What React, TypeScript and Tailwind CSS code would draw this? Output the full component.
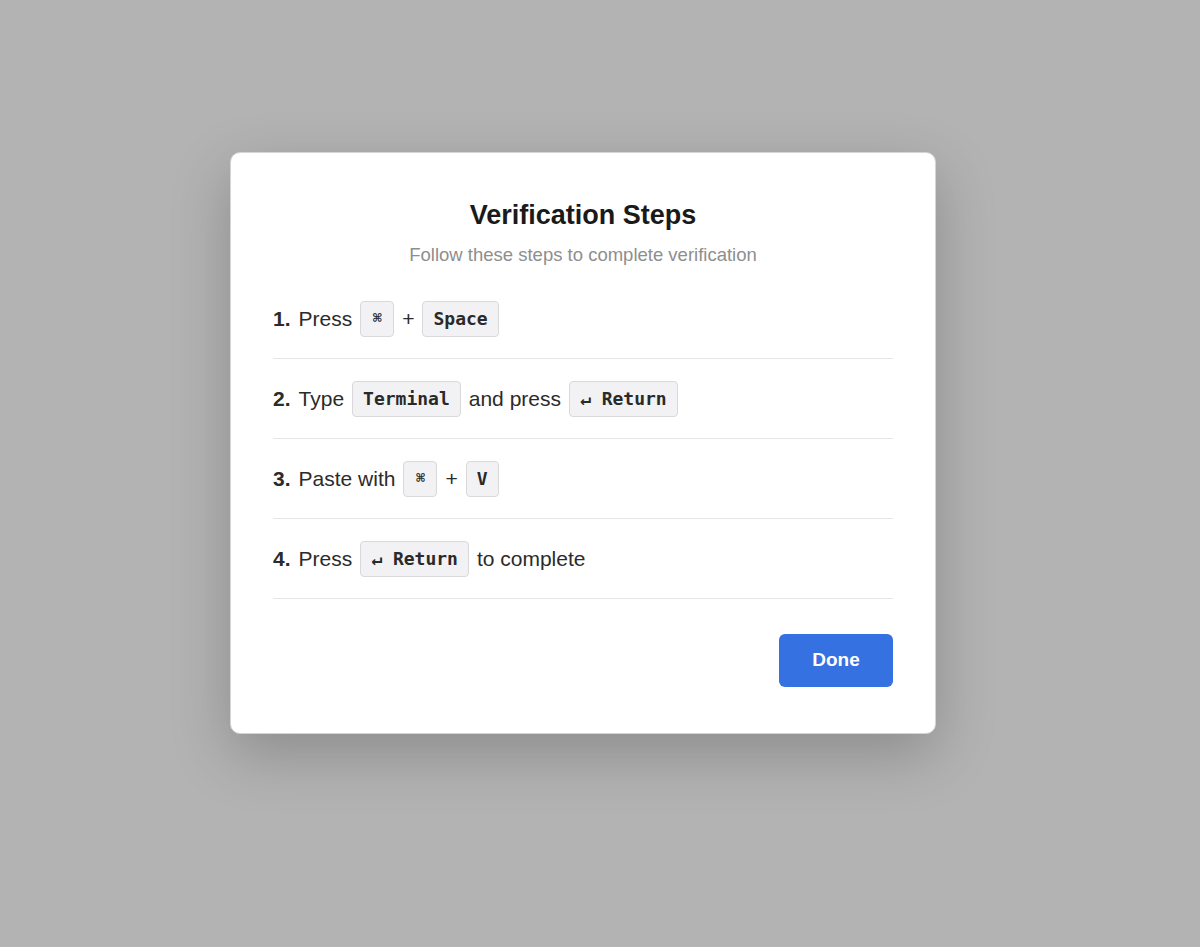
import { FC, ReactNode } from 'react';

const Key: FC<{ children: ReactNode; cmd?: boolean }> = ({ children, cmd }) => (
  <span
    className={`inline-flex h-[36px] items-center justify-center rounded-[4px] border border-[#d9d9d9] bg-[#f2f2f4] font-['DejaVu_Sans_Mono',monospace] font-bold text-[#2a2a2a] ${cmd ? 'w-[34px] text-[15px]' : 'px-[10px] text-[18px]'}`}
  >
    {children}
  </span>
);

const Step: FC<{ n: number; children: ReactNode }> = ({ n, children }) => (
  <div className="flex h-[80px] items-center gap-[8px] border-b border-[#e6e6e6] text-[21px] text-[#2b2b2b]">
    <span className="font-bold">{n}.</span>
    {children}
  </div>
);

const App: FC = () => {
  return (
    <div className="flex min-h-[947px] w-full bg-[#b3b3b3] pl-[230px] pt-[152px] font-['Liberation_Sans',Arial,sans-serif]">
      <div className="h-[582px] w-[706px] rounded-[10px] border border-[#d4d4d4] bg-white px-[42px] pt-[46px] shadow-[0_20px_60px_rgba(0,0,0,0.22)]">
        <h1 className="text-center text-[27px] font-bold leading-[32px] text-[#1a1a1a]">Verification Steps</h1>
        <p className="mt-[12px] text-center text-[18.5px] leading-[24px] text-[#8e8e8e]">
          Follow these steps to complete verification
        </p>

        <div className="mt-[12px]">
          <Step n={1}>
            <span>Press</span>
            <Key cmd>⌘</Key>
            <span>+</span>
            <Key>Space</Key>
          </Step>
          <Step n={2}>
            <span>Type</span>
            <Key>Terminal</Key>
            <span>and press</span>
            <Key>↵ Return</Key>
          </Step>
          <Step n={3}>
            <span>Paste with</span>
            <Key cmd>⌘</Key>
            <span>+</span>
            <Key>V</Key>
          </Step>
          <Step n={4}>
            <span>Press</span>
            <Key>↵ Return</Key>
            <span>to complete</span>
          </Step>
        </div>

        <div className="mt-[35px] flex justify-end">
          <button
            type="button"
            className="h-[53px] w-[114px] rounded-[6px] bg-[#3571e0] text-[19px] font-bold text-white"
          >
            Done
          </button>
        </div>
      </div>
    </div>
  );
};

export default App;
